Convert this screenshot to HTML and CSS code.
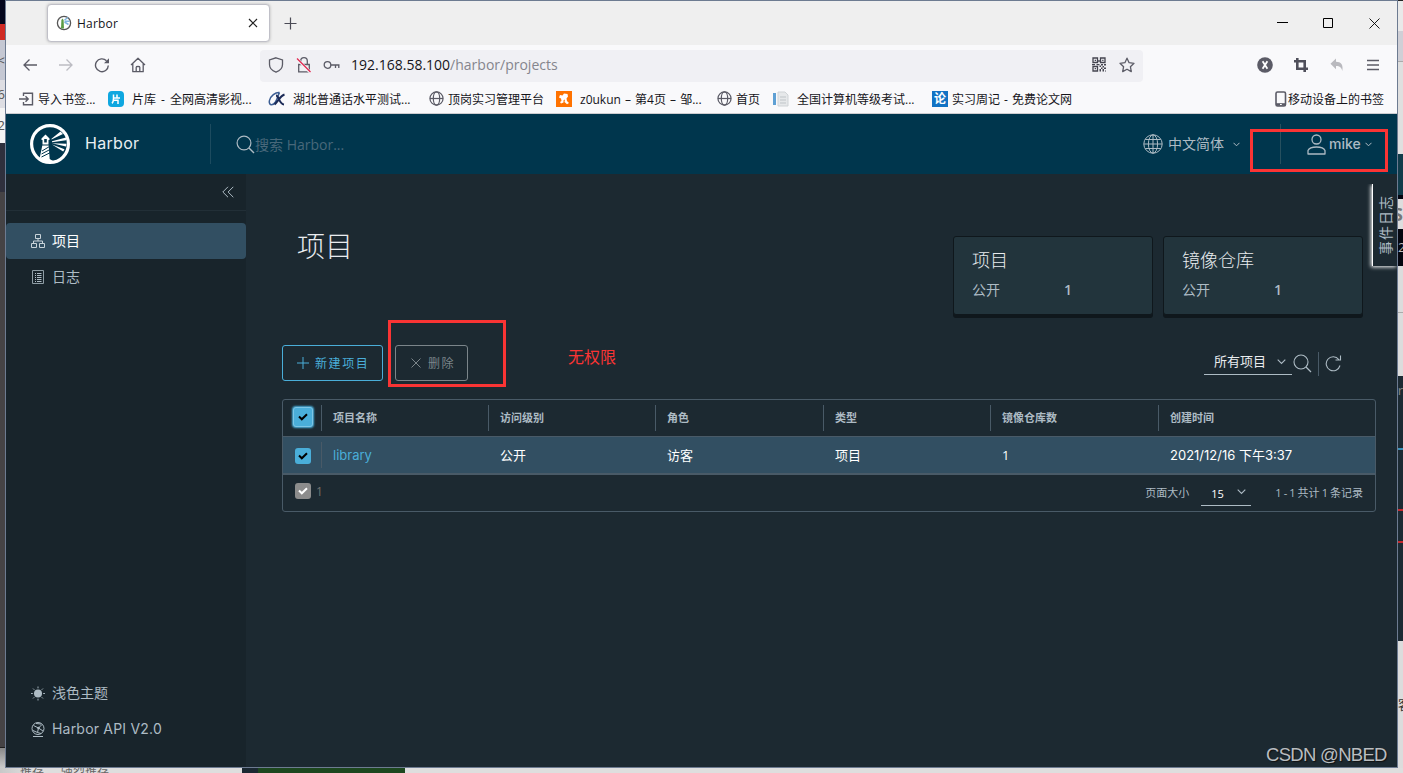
FILE: index.html
```
<!DOCTYPE html>
<html lang="zh-CN">
<head>
  <meta charset="UTF-8">
  <meta name="viewport" content="width=device-width, initial-scale=1.0">
  <title>Harbor</title>
  <link rel="stylesheet" href="styles.css">
</head>
<body>
<div class="desktop">
  <div class="behind-left">
    <i class="bl1"></i><i class="bl2"></i><i class="bl3">&lt;</i><i class="bl4">6</i><i class="bl5">2</i><i class="bl6"></i><i class="bl7"></i><i class="bl8"></i>
  </div>

  <div class="window">
    <div class="tabbar">
      <div class="tab">
        <svg width="16" height="16" viewBox="0 0 16 16"><circle cx="8" cy="8" r="6.6" fill="#fff" stroke="#555" stroke-width="1.3"/><path d="M5 13.5 5.4 5 6.5 3.5 7.6 5 8 13.5z" fill="#5b9b45"/><path d="M8.5 5 12 2.5M8.5 6.2h5M8.5 7l4 2.5" stroke="#7fb4dd" stroke-width="1.5"/></svg>
        <span>Harbor</span>
        <svg class="tab-close" width="10" height="10" viewBox="0 0 10 10"><path d="M1 1l8 8M9 1 1 9" stroke="#222" stroke-width="1.2"/></svg>
      </div>
      <svg class="newtab" width="13" height="13" viewBox="0 0 13 13"><path d="M6.5.5v12M.5 6.5h12" stroke="#4a4a55" stroke-width="1.2"/></svg>
      <div class="win-buttons">
        <svg width="11" height="11" viewBox="0 0 11 11"><path d="M0 4.500h11" stroke="#000"/></svg>
        <svg width="11" height="11" viewBox="0 0 11 11"><path d="M.5.5h9v9h-9z" fill="none" stroke="#000"/></svg>
        <svg width="11" height="11" viewBox="0 0 11 11"><path d="M.5.5l10 10M10.500.5l-10 10" stroke="#000" stroke-width=".9"/></svg>
      </div>
    </div>

    <div class="navbar">
      <svg class="nav-back" width="16" height="16" viewBox="0 0 16 16"><path d="M15 8H2M7.500 2.500 2 8l5.500 5.500" fill="none" stroke="#5b5b66" stroke-width="1.300"/></svg>
      <svg class="nav-next" width="16" height="16" viewBox="0 0 16 16"><path d="M1 8h13M8.500 2.500 14 8l-5.500 5.500" fill="none" stroke="#bcbcc2" stroke-width="1.300"/></svg>
      <svg class="nav-reload" width="16" height="16" viewBox="0 0 16 16"><path d="M14.300 8.500A6.400 6.400 0 1 1 12.500 3.800" fill="none" stroke="#5b5b66" stroke-width="1.400"/><path d="M15 1.300v5h-5z" fill="#5b5b66"/></svg>
      <svg class="nav-home" width="16" height="16" viewBox="0 0 16 16"><path d="M1 8 8 1.300 15 8M2.800 6.500v8.200h10.400V6.500M6.200 14.500v-4.300c0-1 3.600-1 3.600 0v4.300" fill="none" stroke="#5b5b66" stroke-width="1.300" stroke-linejoin="round"/></svg>
      <div class="urlbar">
        <svg width="16" height="16" viewBox="0 0 16 16"><path d="M8 .8 14.500 3v4.500c0 3.500-2.500 6.200-6.500 7.700C4 13.700 1.500 11 1.500 7.500V3z" fill="none" stroke="#5b5b66" stroke-width="1.300"/></svg>
        <svg class="lock" width="16" height="16" viewBox="0 0 16 16"><path d="M2.700 7.500h10.600v7.400H2.700zM4.700 7.500V4a3.300 3.300 0 0 1 6.600 0v3.500" fill="none" stroke="#5b5b66" stroke-width="1.300"/><path d="M1 2l13.500 13.500" stroke="#f2f2f6" stroke-width="3"/><path d="M1 1.500 14.500 15" stroke="#e22850" stroke-width="1.300"/></svg>
        <svg class="key" width="17" height="16" viewBox="0 0 17 16"><circle cx="4.500" cy="8" r="3.300" fill="none" stroke="#5b5b66" stroke-width="1.300"/><path d="M8 8h8.500M12.500 8v3M15.800 8v3" stroke="#5b5b66" stroke-width="1.300"/></svg>
        <span class="url">192.168.58.100<b>/harbor/projects</b></span>
        <svg class="qr" width="14" height="15" viewBox="0 0 14 15"><path d="M1 1h4.500v4.500H1zM8.500 1H13v4.500H8.500zM1 9.500h4.500V14H1z" fill="none" stroke="#44444f" stroke-width="1.300"/><path d="M2.700 2.700h1.300v1.300H2.700zM10.200 2.700h1.300v1.300h-1.300zM2.700 11h1.300v1.300H2.700zM0 7h3v1.300H0zM4.500 7h3v1.300h-3zM6.300 3h1.400v2H6.300zM9 7h2v1.500H9zM12 7h2v1.500h-2zM7.500 8.500H9V10H7.500zM10.500 9H12v1.500h-1.500zM9 10.500h1.500V12H9zM12 10.500h2V12h-2zM7.500 12H9v2.500H7.500zM10.500 12H12v2.500h-1.500zM13 13.500h1v1h-1z" fill="#44444f"/></svg>
        <svg class="star" width="16" height="16" viewBox="0 0 16 16"><path d="m8 1.200 2.100 4.500 4.900.6-3.600 3.400.9 4.900L8 12.200l-4.300 2.400.9-4.900L1 6.300l4.900-.6z" fill="none" stroke="#5b5b66" stroke-width="1.300" stroke-linejoin="round"/></svg>
      </div>
      <div class="tools">
        <svg width="16" height="16" viewBox="0 0 16 16"><circle cx="8" cy="8" r="7.800" fill="#5b5b66"/><path d="m5.600 4.300 4.800 7.400M10.400 4.300 5.600 11.700" stroke="#fff" stroke-width="1.800"/></svg>
        <svg width="16" height="16" viewBox="0 0 16 16"><path d="M4.300 1v10.700H15M1 4.300h10.700V15" fill="none" stroke="#4f4f5a" stroke-width="2.600"/></svg>
        <svg width="16" height="16" viewBox="0 0 16 16"><path d="M7 1.500v3.300c5 0 7.500 3 6.300 9.200C12.500 10.500 11 9 7 9v3.200L1.500 6.800z" fill="#b9b9be"/></svg>
        <svg width="14" height="16" viewBox="0 0 14 16"><path d="M1 3.500h12M1 8h12M1 12.500h12" stroke="#5b5b66" stroke-width="1.300"/></svg>
      </div>
    </div>

    <div class="bookmarks">
      <a class="bm"><svg width="15" height="14" viewBox="0 0 15 14"><path d="M4.500 4V1.200h9v11.600h-9V10M0 7h9M6.500 4.300 9.200 7 6.500 9.700" fill="none" stroke="#5b5b66" stroke-width="1.400"/></svg><span>导入书签...</span></a>
      <a class="bm"><svg width="16" height="16" viewBox="0 0 16 16"><rect width="16" height="16" rx="4" fill="#0fa7e0"/><path d="M5.500 3.500v3.800c0 2.500-.3 4-1.500 5M5.500 7h6.500M9 3.500V7M5.500 9.200H10V13" fill="none" stroke="#fff" stroke-width="1.500"/></svg><span>片库 - 全网高清影视...</span></a>
      <a class="bm"><svg width="17" height="16" viewBox="0 0 17 16"><path d="M11.500 1.500C8 1 2 5 1.300 10c-.5 5 4 4.500 6.200 1S10 4 11.500 1.500" fill="none" stroke="#3b5d93" stroke-width="1.500"/><path d="M8 4.500c3 0 3 8.500 8 9M16.500 3.500C12 5 10 10.500 6.500 13.500" fill="none" stroke="#1c2b57" stroke-width="2"/></svg><span>湖北普通话水平测试...</span></a>
      <a class="bm"><svg width="15" height="15" viewBox="0 0 16 16"><g fill="none" stroke="#5b5b66" stroke-width="1.300"><circle cx="8" cy="8" r="7"/><ellipse cx="8" cy="8" rx="3.400" ry="7"/><path d="M1 8h14"/></g></svg><span>顶岗实习管理平台</span></a>
      <a class="bm"><svg width="16" height="16" viewBox="0 0 16 16"><path d="M0 0h16v16H0z" fill="#ff7200"/><path d="M3 6.500 4 4l2.500.5L8 2.500l3.500.5.5 2.500-1.500 2 .5 2.500 2 2-2 1.200L8.500 11 9 8.500l-1.500.8v2.200L5 12.500 4 11l1.500-1L5 7.500z" fill="#fff"/></svg><span>z0ukun – 第4页 – 邹...</span></a>
      <a class="bm"><svg width="15" height="15" viewBox="0 0 16 16"><g fill="none" stroke="#5b5b66" stroke-width="1.300"><circle cx="8" cy="8" r="7"/><ellipse cx="8" cy="8" rx="3.400" ry="7"/><path d="M1 8h14"/></g></svg><span>首页</span></a>
      <a class="bm"><svg width="16" height="16" viewBox="0 0 16 16"><path d="M0 2h3v12H0z" fill="#5fa0d4"/><path d="M5 1h7l3 3v11H5z" fill="#e6e8ea" stroke="#cfd3d6"/><path d="M7 6h6M7 9h6M7 12h6" stroke="#bfc4c8"/></svg><span>全国计算机等级考试...</span></a>
      <a class="bm"><span class="lun">论</span><span>实习周记 - 免费论文网</span></a>
      <a class="bm bm-mobile"><svg width="12" height="16" viewBox="0 0 12 16"><rect x="1" y="1" width="9.500" height="14" rx="1.500" fill="none" stroke="#5b5b66" stroke-width="1.600"/><path d="M1 13.500h9.500" stroke="#5b5b66" stroke-width="2.600"/><path d="M5 13.500h1.800" stroke="#fff"/></svg><span>移动设备上的书签</span></a>
    </div>

    <div class="header">
      <svg class="logo" width="40" height="40" viewBox="0 0 40 40">
        <circle cx="20" cy="20" r="18.400" fill="none" stroke="#fff" stroke-width="3.200"/>
        <path d="M11.500 14.500 15.500 10.500 19.500 14.500v1.500h-1v4.500h-6V16h-1z" fill="#fff"/><path d="M14.200 15h2.600v3.500h-2.600z" fill="#00364d"/>
        <path d="M12.300 21.500h6.400l1 13.500 4 2.500-8 .5-6-4z" fill="#fff"/><path d="m12 27 7.500-4.500M11.500 30l8.500-4.500M11.500 33l9-4.500" stroke="#00364d" stroke-width="1"/>
        <path d="m21.500 14.800 9-7.300 2.500 2.500-11.500 5.500zM22 17.200l14-3.700v2.700L22 18.300zM22 19.200l14.500.6-.5 2.700zM22 20.500l12.500 4.700-1.300 2.300z" fill="#fff"/>
      </svg>
      <span class="brand">Harbor</span>
      <div class="search">
        <svg width="19" height="19" viewBox="0 0 19 19"><circle cx="8" cy="8" r="6.900" fill="none" stroke="#adbbc4" stroke-width="1.200"/><path d="m13 13 5 5" stroke="#adbbc4" stroke-width="1.400"/></svg><span>搜索 Harbor...</span>
      </div>
      <div class="lang">
        <svg width="20" height="20" viewBox="0 0 20 20"><g fill="none" stroke="#adbbc4" stroke-width="1"><circle cx="10" cy="10" r="9.200"/><ellipse cx="10" cy="10" rx="4.600" ry="9.200"/><path d="M10 1v18M1 10h18M2.300 5.500h15.400M2.300 14.500h15.400"/></g></svg>
        <span>中文简体</span>
        <svg class="caret" width="7" height="5" viewBox="0 0 7 5"><path d="m.5.8 3 3 3-3" fill="none" stroke="#adbbc4"/></svg>
      </div>
      <div class="user">
        <svg width="19" height="21" viewBox="0 0 19 21"><g fill="none" stroke="#adbbc4" stroke-width="1.300"><circle cx="9.500" cy="5.500" r="4.500"/><path d="M1 20v-3.500c2-4.700 15-4.700 17 0V20z" stroke-linejoin="round"/></g></svg>
        <span>mike</span>
        <svg class="caret" width="7" height="5" viewBox="0 0 7 5"><path d="m.5.8 3 3 3-3" fill="none" stroke="#adbbc4"/></svg>
      </div>
    </div>

    <div class="content">
      <div class="sidebar">
        <div class="collapse"><svg width="12" height="12" viewBox="0 0 12 12"><path d="M6 .8.800 6 6 11.200M11.300.8 6.100 6l5.200 5.200" fill="none" stroke="#adbbc4"/></svg></div>
        <div class="item active"><svg width="14" height="14" viewBox="0 0 14 14"><g fill="none" stroke="#c8d3d9" stroke-width="1"><path d="M4.500.5h5v4h-5zM.5 9.500h5v4h-5zM8.500 9.500h5v4h-5zM7 4.500v2.500M2.500 9.500V7h9v2.500"/></g></svg><span>项目</span></div>
        <div class="item"><svg width="14" height="14" viewBox="0 0 14 14"><path d="M1.500.5h11v13h-11z" fill="none" stroke="#8e9da5"/><path d="M4 3.500h1M6 3.500h4.500M4 5.500h1M6 5.500h4.500M4 7.500h1M6 7.500h4.500M4 9.500h1M6 9.500h4.500M4 11.500h1M6 11.500h4.500" stroke="#adbbc4"/></svg><span>日志</span></div>
        <div class="item theme"><svg width="15" height="15" viewBox="0 0 15 15"><circle cx="7.500" cy="7.500" r="4.300" fill="#adbbc4"/><path d="M7.500 0v2M7.500 13v2M0 7.500h2M13 7.500h2M2.200 2.200l1.300 1.300M11.500 11.500l1.300 1.300M12.800 2.200l-1.300 1.300M3.500 11.500l-1.300 1.300" stroke="#adbbc4"/></svg><span>浅色主题</span></div>
        <div class="item"><svg width="14" height="15" viewBox="0 0 14 15"><g fill="none" stroke="#adbbc4"><circle cx="7" cy="6.500" r="6"/><path d="M2 14.500h10M2.500 3.500l5 2.500 3.500-3.500M7.500 6l-1 4.500L2 8.500M7.500 6l4.500 3M5 1.500l5 .5M6.500 10.500l3.500 1"/></g><circle cx="7.500" cy="6" r="1.300" fill="#adbbc4"/></svg><span class="api">Harbor API V2.0</span></div>
      </div>

      <div class="main">
        <div class="summary">
          <h1>项目</h1>
          <div class="card"><h2>项目</h2><p><span>公开</span><em>1</em></p></div>
          <div class="card"><h2>镜像仓库</h2><p><span>公开</span><em>1</em></p></div>
        </div>

        <div class="toolbar">
          <div class="btn"><svg width="12" height="12" viewBox="0 0 12 12"><path d="M6 0v12M0 6h12" stroke="#4aaed9"/></svg><span>新建项目</span></div>
          <div class="btn disabled"><svg width="10" height="10" viewBox="0 0 10 10"><path d="m.5.5 9 9M9.500.5l-9 9" stroke="#7b858a"/></svg><span>删除</span></div>
          <div class="filter"><span>所有项目</span><svg width="9" height="6" viewBox="0 0 9 6"><path d="m.7.7 3.800 3.800L8.300.7" fill="none" stroke="#adbbc4" stroke-width="1.100"/></svg></div>
          <svg class="find" width="19" height="19" viewBox="0 0 19 19"><circle cx="8" cy="8" r="7" fill="none" stroke="#adbbc4" stroke-width="1.100"/><path d="m13 13 5 5" stroke="#adbbc4" stroke-width="1.300"/></svg>
          <div class="refresh"><svg width="17" height="17" viewBox="0 0 17 17"><path d="M15 10.500A7 7 0 1 1 13.800 4.500M10.500 5H15.500V.5" fill="none" stroke="#adbbc4" stroke-width="1.100"/></svg></div>
        </div>

        <div class="datagrid">
          <div class="row head">
            <div class="check"><span class="box focus"><svg width="10" height="8" viewBox="0 0 10 8"><path d="m1 3.500 2.800 2.800L9 1.200" fill="none" stroke="#000" stroke-width="2"/></svg></span></div>
            <div>项目名称</div><div>访问级别</div><div>角色</div><div>类型</div><div>镜像仓库数</div><div>创建时间</div>
          </div>
          <div class="row selected">
            <div class="check"><span class="box"><svg width="10" height="8" viewBox="0 0 10 8"><path d="m1 3.500 2.800 2.800L9 1.200" fill="none" stroke="#000" stroke-width="2"/></svg></span></div>
            <div class="link">library</div><div>公开</div><div>访客</div><div>项目</div><div>1</div><div class="date">2021/12/16 下午3:37</div>
          </div>
          <div class="foot">
            <span class="box gray"><svg width="10" height="8" viewBox="0 0 10 8"><path d="m1 3.500 2.800 2.800L9 1.200" fill="none" stroke="#fff" stroke-width="2"/></svg></span>
            <span class="count">1</span>
            <span class="size-label">页面大小</span>
            <div class="size"><span>15</span><svg width="9" height="6" viewBox="0 0 9 6"><path d="m.7.7 3.800 3.800L8.300.7" fill="none" stroke="#adbbc4" stroke-width="1.100"/></svg></div>
            <span class="total">1 - 1 共计 1 条记录</span>
          </div>
        </div>
      </div>
    </div>

    <div class="event-log"><span>事件日志</span></div>
  </div>

  <div class="behind-right">
    <i class="br1"></i><i class="br2"></i><i class="br3"></i><i class="br4"></i><i class="br5">S</i><i class="br6">2</i><i class="br7"></i><i class="br8"></i><i class="br9">r</i><i class="br10"></i><i class="br11"></i><i class="br12"></i><i class="br13">客</i>
  </div>

  <div class="behind-bottom">
    <span>推荐</span><span>强烈推荐</span><i class="bb1"></i><i class="bb2"></i>
  </div>

  <div class="mark mark-user"></div>
  <div class="mark mark-delete"></div>
  <div class="note">无权限</div>
  <div class="watermark">CSDN @NBED</div>
</div>
</body>
</html>
```

FILE: styles.css
```
* {
box-sizing: border-box;
}

body {
margin: 0;
font-family: "Open Sans", "Noto Sans CJK SC", sans-serif;
overflow: hidden;
}

svg {
display: block;
flex: none;
}

span {
white-space: nowrap;
}

.desktop {
position: relative;
display: grid;
grid-template-columns: 5px 1393px 5px;
grid-template-rows: 768px 5px;
width: 1403px;
height: 773px;
overflow: hidden;
background: #dcdcdc;
}

/* what shows behind the browser window */
.behind-left, .behind-right {
display: flex;
flex-direction: column;
overflow: hidden;
grid-row: 1;
}

.behind-left i, .behind-right i {
display: flex;
align-items: center;
justify-content: flex-end;
flex: none;
font-style: normal;
font-size: 13px;
line-height: 1;
color: #555;
overflow: hidden;
}

.bl1 { height: 24px; background: #04061c; }
.bl2 { height: 16px; background: #d02a24; }
.bl3 { height: 40px; background: #c5c8d3; }
.bl4 { height: 28px; background: #dedee3; }
.bl5 { height: 35px; background: #f4f4f4; }
.bl6 { height: 49px; background: #2f303d; }
.bl7 { height: 556px; background: #454345; border-bottom: 1px solid #1e1e1e; }
.bl8 { height: 20px; background: linear-gradient(#888, #ccc); }

.br1 { height: 31px; background: #e9e9e9; border-top: 1px solid #222; }
.br2 { height: 30px; background: #cfcfd6; }
.br3 { height: 93px; background: #dfdfdf; border-top: 1px solid #aaa; }
.br4 { height: 45px; background: #113c4b; border-bottom: 4px solid #020510; }
.behind-right .br5 { height: 30px; background: #ddd; font-size: 18px; font-weight: bold; color: #777; }
.behind-right .br6 { height: 37px; background: #04060f; color: #bbb; justify-content: flex-start; }
.br7 { height: 47px; background: #dcdcdc; border-bottom: 1px solid #aaa; }
.br8 { height: 63px; background: #dcdcdc; }
.behind-right .br9 { height: 72px; background: #1c2a33; color: #888; padding-bottom: 44px; }
.br10 { height: 61px; background: #1c2a33; border-top: 2px solid #3a8fb8; }
.br11 { height: 32px; background: #1c2a33; border-top: 2px solid #c5282d; }
.br12 { height: 100px; background: #1c2a33; border-top: 2px solid #c5282d; }
.behind-right .br13 { height: 127px; background: #dcdcdc; color: #333; justify-content: flex-start; }

.behind-bottom {
grid-row: 2;
grid-column: 1 / 4;
display: flex;
height: 5px;
overflow: hidden;
padding-left: 20px;
font-size: 12px;
line-height: 5px;
color: #666;
background: linear-gradient(90deg, #c8c8c8, #dedede 30px);
}

.behind-bottom span {
margin-right: 17px;
flex: none;
}

.bb1 {
width: 16px;
background: #1b2832;
margin-left: 116px;
flex: none;
}

.bb2 {
width: 147px;
background: #1d471f;
flex: none;
}

.window {
grid-row: 1;
grid-column: 2;
position: relative;
border: 1px solid #6d7b91;
display: flex;
flex-direction: column;
background: #1c2931;
}

.behind-right {
grid-column: 3;
}

/* browser */
.tabbar {
height: 44px;
background: #efefef;
display: flex;
align-items: center;
padding-left: 41px;
}

.tab {
width: 223px;
height: 38px;
background: #fff;
border: 1px solid #c0c0c8;
border-radius: 4px;
box-shadow: 0 0 3px rgba(0,0,0,.25);
display: flex;
align-items: center;
padding: 0 11px 0 8px;
font-size: 12px;
color: #15141a;
}

.tab span {
margin-left: 5px;
letter-spacing: .2px;
}

.tab-close {
margin-left: auto;
}

.newtab {
margin-left: 14px;
}

.win-buttons {
margin-left: auto;
display: flex;
gap: 35px;
padding-right: 17px;
}

.navbar {
height: 41px;
background: #f9f9fb;
display: flex;
align-items: center;
}

.navbar > svg {
margin-top: -1px;
}

.nav-back { margin-left: 16px; }
.nav-next { margin-left: 20px; }
.nav-reload { margin-left: 20px; }
.nav-home { margin-left: 20px; }

.urlbar {
width: 883px;
height: 32px;
margin-left: 114px;
padding: 0 8px 2px;
background: #f0f0f4;
border-radius: 4px;
display: flex;
align-items: center;
}

.lock { margin-left: 12px; }
.key { margin-left: 11px; }

.url {
margin-left: 11px;
font-size: 14px;
color: #15141a;
}

.url b {
font-weight: normal;
color: #85858d;
}

.qr { margin-left: auto; }
.star { margin-left: 13px; }

.tools {
display: flex;
gap: 20px;
margin: -2px 0 0 auto;
padding-right: 17px;
}

.tools svg:last-child {
margin-left: 1px;
}

.bookmarks {
height: 28px;
background: #f9f9fb;
border-bottom: 1px solid #ccccd0;
display: grid;
grid-template-columns: 89px 160px 161px 127px 161px 56px 159px 1fr 122px;
align-items: center;
padding: 0 0 2px 13px;
font-size: 12px;
color: #15141a;
}

.bm {
display: flex;
align-items: center;
gap: 4px;
word-spacing: 1px;
}

.bm:nth-child(2), .bm:nth-child(3), .bm:nth-child(5), .bm:nth-child(7) {
gap: 8px;
}

.bm:nth-child(2) {
word-spacing: 2px;
}

.lun {
width: 16px;
height: 16px;
line-height: 16px;
text-align: center;
background: #1273c4;
color: #fff;
font-weight: bold;
}

.bm-mobile {
gap: 1px;
}

/* harbor header */
.header {
height: 60px;
background: #00364d;
display: flex;
align-items: center;
padding-left: 24px;
color: #adbbc4;
font-size: 14px;
}

.brand {
width: 125px;
margin: -2px 0 0 15px;
font-family: Inter, sans-serif;
font-size: 16px;
letter-spacing: .3px;
color: #e9eff2;
}

.search {
height: 40px;
display: flex;
align-items: center;
border-left: 1px solid #1c4b5f;
padding-left: 25px;
color: #48687a;
}

.lang {
display: flex;
align-items: center;
gap: 5px;
margin-left: auto;
width: 137px;
}

.lang span, .user span {
margin-top: -2px;
}

.lang .caret {
margin-left: 4px;
}

.user {
height: 40px;
width: 117px;
border-left: 1px solid #26505f;
padding-left: 26px;
display: flex;
align-items: center;
gap: 3px;
font-weight: 600;
}

.user span {
font-family: Inter, sans-serif;
font-weight: 500;
}

.user .caret {
margin-left: 1px;
}

.content {
display: flex;
height: 593px;
}

.sidebar {
width: 240px;
background: #18242b;
display: flex;
flex-direction: column;
padding-bottom: 20px;
}

.collapse {
height: 37px;
border-bottom: 1px solid #222f37;
display: flex;
align-items: center;
justify-content: flex-end;
padding-right: 12px;
margin-bottom: 12px;
}

.item {
height: 36px;
display: flex;
align-items: center;
gap: 7px;
padding-left: 25px;
font-size: 14px;
color: #adbbc4;
}

.item svg {
width: 14px;
}

.item span {
margin-top: -2px;
}

.active {
background: #324f62;
border-radius: 4px;
color: #fff;
}

.theme {
margin-top: auto;
}

.api {
font-family: Inter, sans-serif;
letter-spacing: .2px;
}

.main {
flex: 1;
padding: 62px 21px 0 36px;
}

.summary {
display: flex;
gap: 10px;
padding-right: 13px;
height: 79px;
}

.summary h1 {
margin: -13px auto 0 15px;
font-size: 28px;
font-weight: 300;
line-height: 46px;
color: #e9ecef;
}

.card {
width: 200px;
height: 79px;
background: #22343c;
border: 1px solid #0f171c;
border-radius: 3px;
box-shadow: 0 3px 0 #0f171c;
padding: 10px 18px;
color: #adbbc4;
}

.card h2 {
margin: 0;
font-size: 18px;
font-weight: 300;
line-height: 26px;
color: #e9ecef;
}

.card p {
margin: 6px 0 0;
display: flex;
font-size: 14px;
line-height: 22px;
}

.card p span {
width: 92px;
}

.card em {
font-style: normal;
font-weight: 600;
}

.toolbar {
display: flex;
height: 36px;
margin-top: 30px;
}

.btn {
width: 101px;
height: 36px;
border: 1px solid #4aaed9;
border-radius: 3px;
display: flex;
align-items: center;
gap: 6px;
padding-left: 14px;
font-size: 12px;
letter-spacing: 1.6px;
color: #4aaed9;
}

.disabled {
width: 73px;
margin-left: 12px;
padding-left: 15px;
gap: 7px;
border-color: #7b858a;
color: #7b858a;
}

.filter {
width: 88px;
height: 26px;
margin: 4px 0 0 auto;
border-bottom: 1px solid #adbbc4;
display: flex;
align-items: center;
padding-left: 10px;
gap: 11px;
font-size: 13px;
color: #e9ecef;
}

.filter span {
margin-top: -2px;
}

.find {
margin: 9px 6px 0 1px;
}

.refresh {
height: 24px;
margin: 7px 34px 0 0;
padding: 3px 0 0 6px;
border-left: 1px solid #495a67;
}

.datagrid {
height: 113px;
margin-top: 18px;
border: 1px solid #495a67;
border-radius: 3px;
}

.row {
display: grid;
grid-template-columns: 38px 167px 167px 168px 167px 168px 1fr;
align-items: center;
height: 37px;
border-bottom: 1px solid #495a67;
font-size: 13px;
color: #fff;
}

.row div {
padding-left: 12px;
}

.row .check {
padding-left: 12px;
}

.head {
font-size: 11px;
font-weight: 700;
color: #adbbc4;
}

.head div:not(.check) {
height: 26px;
line-height: 26px;
padding-left: 11px;
border-left: 1px solid #495a67;
}

.head .check {
padding-left: 10px;
}

.selected {
height: 38px;
background: #324f62;
border-bottom-width: 2px;
}

.selected div:not(.check) {
margin-top: -1px;
}

.selected .check {
padding-top: 2px;
}

.row .link {
color: #4aaed9;
font-family: Inter, sans-serif;
height: 26px;
line-height: 26px;
border-left: 1px solid #495a67;
padding-left: 11px;
}

.date {
font-family: Inter, "Noto Sans CJK SC", sans-serif;
}

.box {
display: flex;
align-items: center;
justify-content: center;
width: 16px;
height: 16px;
border-radius: 3px;
background: #4aaed9;
}

.focus {
width: 20px;
height: 20px;
margin-top: -2px;
border: 1px solid #7cc6e6;
box-shadow: 0 0 2px 1px #4aaed9;
}

.gray {
background: #8c8c8c;
margin-top: -4px;
}

.foot {
height: 36px;
display: flex;
align-items: center;
padding: 0 12px;
font-size: 11px;
color: #adbbc4;
}

.count {
margin: -3px 0 0 5px;
font-size: 12px;
color: #74716e;
}

.size-label {
margin: -2px 0 0 auto;
}

.size {
width: 50px;
height: 25px;
margin: 1px 24px 0 12px;
padding-left: 10px;
border-bottom: 1px solid #adbbc4;
display: flex;
align-items: center;
gap: 13px;
color: #fff;
}

.size svg {
margin-top: -3px;
}

.total {
margin-top: -2px;
word-spacing: -.8px;
}

.event-log {
position: absolute;
top: 183px;
right: 0;
width: 25px;
height: 82px;
border-left: 1px solid #fff;
box-shadow: -1px 1px 4px #fff;
clip-path: inset(0 0 -6px -6px);
background: #1c2931;
display: flex;
align-items: center;
justify-content: center;
font-size: 14px;
color: #adbbc4;
}

.event-log span {
writing-mode: vertical-rl;
text-orientation: sideways;
transform: rotate(180deg);
letter-spacing: 1px;
}

/* red annotations */
.mark {
position: absolute;
border: 3px solid #fa3434;
}

.mark-user {
left: 1250px;
top: 129px;
width: 138px;
height: 43px;
}

.mark-delete {
left: 388px;
top: 320px;
width: 118px;
height: 67px;
}

.note {
position: absolute;
left: 568px;
top: 345px;
font-size: 16px;
line-height: 24px;
color: #fa3434;
}

.watermark {
position: absolute;
left: 1266px;
top: 743px;
font-family: "Liberation Sans", sans-serif;
font-size: 18.5px;
line-height: 24px;
letter-spacing: -.7px;
color: #b9bdc0;
white-space: nowrap;
text-shadow: 1px 1px 1px #111;
}
```
